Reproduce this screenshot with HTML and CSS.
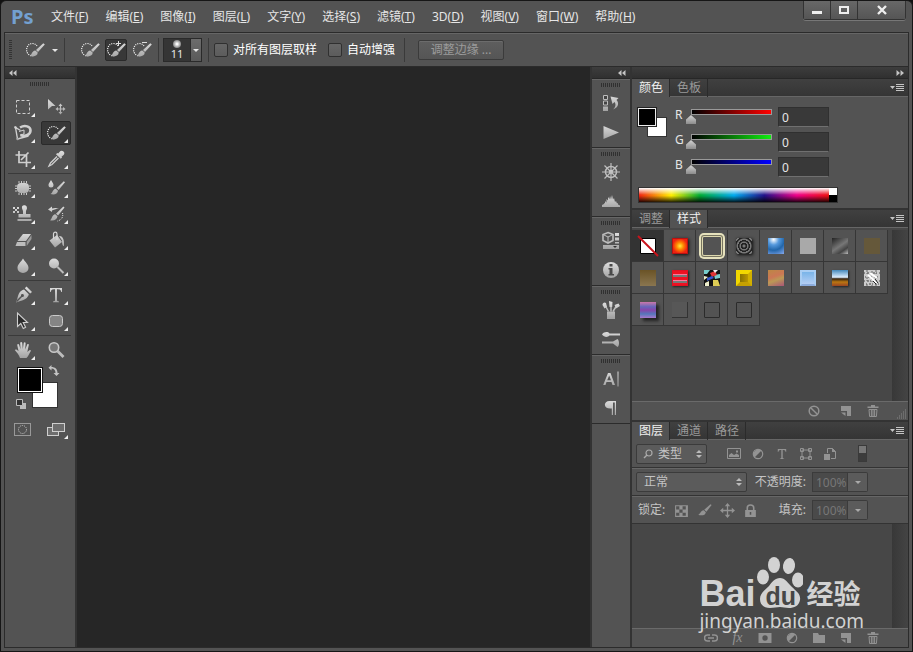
FILE: index.html
```
<!DOCTYPE html>
<html lang="zh-CN">
<head>
    <meta charset="UTF-8">
    <meta name="viewport" content="width=device-width, initial-scale=1.0">
    <title>Photoshop</title>
    <link rel="stylesheet" href="styles.css">
</head>
<body>
    <!-- Shared icons -->
    <svg class="sprite" aria-hidden="true">
        <defs>
            <linearGradient id="metal" gradientUnits="userSpaceOnUse" x1="0" y1="2" x2="0" y2="18">
                <stop offset="0" stop-color="#dedede"/>
                <stop offset="1" stop-color="#a2a2a2"/>
            </linearGradient>
        </defs>
        <symbol id="brush" viewBox="0 0 20 20">
            <path d="M19.500 2.500 12.600 11.500l-3-2.500L18 1.500z"/>
            <path d="M9 9.800l2.800 2.400c-.3 3.800-5 5.300-10.300 3.600 3-.8 3-5.600 7.500-6z"/>
        </symbol>
        <symbol id="quick-select" viewBox="0 0 20 20">
            <path d="M8.500 15.500C-.5 17-.5 3.500 7.500 3.500c2 0 3.500 1 4.500 2.500" fill="none" stroke="#f0f0f0" stroke-width="1.200" stroke-dasharray="1.100 1.100"/>
            <path d="M19.800 4.500 13 12l-2-1.900L18.300 3.200z"/>
            <path d="M10.300 10.400l2.400 2.200c0 3.600-4 4.600-8.200 3.200 2.600-.9 2-5 5.800-5.400z"/>
        </symbol>
        <symbol id="marquee" viewBox="0 0 20 20">
            <rect x="3.500" y="3.500" width="13" height="13" fill="none" stroke="#cfcfcf" stroke-dasharray="3 2"/>
        </symbol>
        <symbol id="move" viewBox="0 0 20 20">
            <path d="M2 2l7.500 7H6l-4 3.500z"/>
            <path d="M14.500 6.500l2 2.500h-1.400v2.400H17V10l2.500 2-2.500 2v-1.400h-1.900V15h1.400l-2 2.500-2-2.500h1.400v-2.400H12V14l-2.500-2 2.500-2v1.400h1.900V9h-1.400z"/>
        </symbol>
        <symbol id="lasso" viewBox="0 0 20 20">
            <path d="M4.500 16 2.500 4.500l5 3M4.500 16l11-3" fill="none" stroke="#cfcfcf" stroke-width="1.400"/>
            <path d="M7 4.500c5-3 10.500-1 10.500 3 0 4-5 6.500-10 4.500" fill="none" stroke="#cfcfcf" stroke-width="2.600"/>
            <path d="M6 8.500l5-1.500v4l-4 1" fill="none" stroke="#cfcfcf"/>
            <circle cx="2.500" cy="4.500" r="1.200"/><circle cx="4.500" cy="16" r="1.200"/>
        </symbol>
        <symbol id="crop" viewBox="0 0 20 20">
            <path d="M6 2v11.500h12M2.500 6h11v12M15.500 3.500 8 11" fill="none" stroke="#cfcfcf" stroke-width="1.700"/>
        </symbol>
        <symbol id="eyedropper" viewBox="0 0 20 20">
            <path d="M17.500 2.500c1.500 1.500.8 3-.5 4l-1.500 1.200.6.800-1.400 1.300L10 5.200l1.300-1.300.9.600 1.300-1.500c1-1.200 2.500-1.700 4-.5z"/>
            <path d="M11 7.500 4.500 14 3 17l3-1.500L12.500 9" fill="none" stroke="#cfcfcf" stroke-width="1.300"/>
        </symbol>
        <symbol id="patch" viewBox="0 0 20 20">
            <rect x="4" y="5" width="12" height="10" rx="4"/>
            <path d="M2 8h2M2 10.500h2M2 13h2M16 8h2M16 10.500h2M16 13h2M6 3v2M8.500 3v2M11 3v2M13.500 3v2M6 15v2M8.500 15v2M11 15v2M13.500 15v2" stroke="#c8c8c8" fill="none"/>
        </symbol>
        <symbol id="drop-brush" viewBox="0 0 20 20">
            <path d="M5 2c1.500 2.500 2.500 3.500 2.500 5a2.500 2.500 0 0 1-5 0C2.500 5.500 3.500 4.500 5 2z"/>
            <path d="M19 4.200 12.600 12l-2-1.800L17.800 3.200z"/>
            <path d="M9.800 10.800l2.200 2c-.3 3.200-3.700 4.500-7.500 3.300 2.200-.8 1.900-4.900 5.300-5.300z"/>
        </symbol>
        <symbol id="stamp" viewBox="0 0 20 20">
            <path d="M9 2.500a2.700 2.700 0 0 1 5 1.500c0 1.500-1 2-1 3.500V10h4.500v3.500h-12V10H10V7.500C10 6 8.500 4.500 9 2.500zM4.500 15h14v2h-14z"/>
            <path d="M0 3h2v2H0zM4 3h2v2H4zM2 5h2v2H2zM0 7h2v2H0zM4 7h2v2H4z"/>
        </symbol>
        <symbol id="history" viewBox="0 0 20 20">
            <path d="M2 5.500l4-3v2c3-1 5-.5 7 0-3 .5-4 .6-7 2V8z"/>
            <path d="M18.500 3.500 12 11.500l-2-1.800L17.300 2.500z"/>
            <path d="M9.300 10.300l2.200 2c-.3 3.200-3.500 5-7.500 4 2-.8 1.900-5.600 5.300-6z"/>
            <path d="M16.500 9c1 4-1 7-5 8" fill="none" stroke="#e0e0e0" stroke-dasharray="1 1"/>
        </symbol>
        <symbol id="eraser" viewBox="0 0 20 20">
            <path d="M10 4h8l-5 7H4.500z"/>
            <path d="M4 12h8.500v4H2.500z" fill="#bcbcbc"/>
            <path d="M13.700 11.800 18.500 5v4L13.700 16z" fill="#999"/>
        </symbol>
        <symbol id="bucket" viewBox="0 0 20 20">
            <path d="M3.500 10.500 11 5l5 7-7 5.500z"/>
            <path d="M7.500 9V4c0-2.500 3.500-2.500 3.500 0v6" fill="none" stroke="#d6d6d6" stroke-width="1.200"/>
            <path d="M13 6c4-.5 5.500 4 5 10-1.500 0-2-2-2-5.500z"/>
        </symbol>
        <symbol id="drop" viewBox="0 0 20 20">
            <path d="M10 2.500c2.500 4 5.500 6 5.500 9.500a5.500 5 0 0 1-11 0C4.500 8.500 7.500 6.500 10 2.500z"/>
        </symbol>
        <symbol id="dodge" viewBox="0 0 20 20">
            <circle cx="8" cy="7.500" r="5"/>
            <path d="M11.500 11l6 6" stroke="#bdbdbd" stroke-width="2"/>
        </symbol>
        <symbol id="pen" viewBox="0 0 20 20">
            <path d="M13.500 1.500 19 7l-1.800 1.600-5.400-5.400z"/>
            <path fill-rule="evenodd" d="M11 4.500 15.800 9.200c-1 4-4.300 5.800-9.300 7L3 17.500l1.300-3.800C5.500 8.700 7 5.500 11 4.500zM4 17l5-5a1.500 1.500 0 1 0-1-1l-5 5z"/>
        </symbol>
        <symbol id="type" viewBox="0 0 20 20">
            <path d="M4 3h12v4h-.8c-.3-2-1-2.800-4.200-2.800V15c0 1 .5 1.300 2 1.500v.7H7v-.7c1.500-.2 2-.5 2-1.500V4.200c-3.200 0-3.900.8-4.200 2.800H4z"/>
        </symbol>
        <symbol id="arrow" viewBox="0 0 20 20">
            <path d="M4.500 2v13.500l3.300-3 2.500 5 2.300-1.200-2.400-4.800h4.300z" fill="#2b2b2b" stroke="#cfcfcf" stroke-width="1.100"/>
        </symbol>
        <symbol id="shape" viewBox="0 0 20 20">
            <rect x="3.500" y="4.500" width="13" height="11" rx="3" fill="#858585" stroke="#cacaca"/>
        </symbol>
        <symbol id="hand" viewBox="0 0 20 20">
            <path d="M7 18c-1-3-3-5.500-5.200-8 .8-1 2.200-.5 3.700 1.200L4.200 4.800c.4-1 1.500-1 1.900 0l1.400 4.400-.3-6.400c.4-1.200 1.600-1.200 2 0l.6 6.200 1-6.200c.6-1 1.600-.8 1.800.2l-.4 6.500 2-5c.7-.8 1.700-.4 1.600.6L14.300 12l2.200-1.800c1-.4 1.500.3 1.200 1-1.500 2-2.200 4.800-4.200 6.800z"/>
        </symbol>
        <symbol id="zoom" viewBox="0 0 20 20">
            <circle cx="8" cy="7.500" r="4.700" fill="#777" stroke="#c8c8c8" stroke-width="1.600"/>
            <path d="M11.500 11l6 6" stroke="#bdbdbd" stroke-width="2.800"/>
        </symbol>
        <symbol id="mask" viewBox="0 0 20 20">
            <rect x="1.500" y="4.500" width="16" height="12" fill="none" stroke="#999"/>
            <circle cx="9.500" cy="10.500" r="4" fill="none" stroke="#ccc" stroke-dasharray="1 1"/>
        </symbol>
        <symbol id="screens" viewBox="0 0 20 20">
            <rect x="1.500" y="8.500" width="11" height="8" fill="#6e6e6e" stroke="#cfcfcf"/>
            <rect x="6.500" y="4.500" width="12" height="8" fill="#6e6e6e" stroke="#cfcfcf"/>
        </symbol>
        <symbol id="swap" viewBox="0 0 12 12">
            <path d="M3.500 0v2C7 2 9.500 4 9.500 8h2L8.500 11 5.500 8h2c0-3-1.500-4.500-4-4.500v2L.5 2.800z"/>
        </symbol>
        <symbol id="history-panel" viewBox="0 0 20 20">
            <path d="M2.500 2.500h4v4h-4zM2.500 8h4v4h-4z" fill="#444" stroke="#bdbdbd"/><path d="M2 13.500h5v4.500H2z"/>
            <path d="M12 16.500c6-2 6-7 3.500-9.500l2-2-8-1.500 2 7.500 2-2c1.500 2 1.500 5-1.500 7.500z"/>
        </symbol>
        <symbol id="play" viewBox="0 0 20 20"><path d="M2.500 4 18 10.500 2.500 17z"/></symbol>
        <symbol id="wheel" viewBox="0 0 20 20">
            <circle cx="10" cy="10" r="5.500" fill="none" stroke="#bdbdbd" stroke-width="1.500"/>
            <path d="M10 1v18M1 10h18M3.500 3.500l13 13M16.500 3.500l-13 13" stroke="#bdbdbd" stroke-width="1.200"/>
            <circle cx="10" cy="10" r="2.200"/>
        </symbol>
        <symbol id="histogram" viewBox="0 0 20 20">
            <path d="M1 16v-2l2-1v-1l1 .5V10l1.500 1.500V8L7 9.500V6l1.500 2L9 5l1 3.500L11 4l1 4.500L13 7l1 4 1-1 1 2.500 1-.5v1.500l2 1V16z"/>
        </symbol>
        <symbol id="props" viewBox="0 0 20 20">
            <path d="M7 1.500l5 2v6l-5 2.500-5-2.500v-6z" fill="none" stroke="#bdbdbd" stroke-width="1.600"/>
            <path d="M2 3.500l5 2.500 5-2.500M7 6v6" fill="none" stroke="#bdbdbd"/>
            <path d="M14 2h4v3h-4zM14 6.500h4v3h-4zM14 11h4v1.500h-4zM2 14h16v4H2z"/>
            <path d="M12 15h4l-2 2z" fill="#333"/>
        </symbol>
        <symbol id="info" viewBox="0 0 20 20">
            <circle cx="10" cy="10" r="8"/>
            <path d="M8.500 4h3v2.500h-3zM7.500 8h4v6h1.500v1.500h-5.500V14h1V9.500h-1z" fill="#4a4a4a"/>
        </symbol>
        <symbol id="brushes" viewBox="0 0 20 20">
            <path d="M6 11.500h8V19H6z"/>
            <path d="M7.500 11.500 4 5M10 11.500V5M12 11.500 16 5" stroke="#bdbdbd" stroke-width="1.500"/>
            <path d="M1.500 5c0-2 2-3.500 3.500-2l1 4-2.500 1.500zM8 1l3.500 1-.3 5H8.500zM13.500 5l4-1.500L19 6l-4 2.500z"/>
        </symbol>
        <symbol id="presets" viewBox="0 0 20 20">
            <path d="M1 5.500C3 2.500 7 2.500 8.500 4.500H19v2H8.500C7 8.500 3 8.500 1 5.500zM1 12.500h11l4.500-2.500c2 1.500 2 7 0 8L12 14.500H1z"/>
        </symbol>
        <symbol id="character" viewBox="0 0 20 20">
            <path fill-rule="evenodd" d="M7 4h2.500L14 16h-2.500l-1-3h-5l-1 3H2.200zM8.200 6.500 6.200 11.300h3.800zM16.500 2.500h1v15h-1z"/>
        </symbol>
        <symbol id="paragraph" viewBox="0 0 20 20">
            <path d="M15 3v14h-1.200V4.500H12V17h-1.200v-6.500C2 11.500 2 3 8.500 3z"/>
        </symbol>
        <symbol id="none" viewBox="0 0 14 14">
            <circle cx="7" cy="7" r="4.800" fill="none" stroke="currentColor" stroke-width="1.500"/>
            <path d="M3.700 3.700l6.600 6.600" stroke="currentColor" stroke-width="1.500"/>
        </symbol>
        <symbol id="new" viewBox="0 0 14 14"><path d="M2 2h10v10H8V7H2z"/><path d="M2 8.500h4.500V12z"/></symbol>
        <symbol id="trash" viewBox="0 0 14 14">
            <path d="M5 1h4v1.500h3.500V4h-11V2.500H5z"/>
            <path d="M3 5.500h8l-.6 7H3.600zM5.400 5.500v7M7 5.500v7M8.600 5.500v7" fill="none" stroke="currentColor"/>
        </symbol>
        <symbol id="picture" viewBox="0 0 14 14">
            <path d="M.5 1.500h13v10H.5z" fill="none" stroke="currentColor"/>
            <path d="M2 10V8l2.500-2L7 8l2.500-1.500L12 8v2zM9 3.500h2v2H9z"/>
        </symbol>
        <symbol id="adjust" viewBox="0 0 14 14">
            <circle cx="7" cy="7" r="4.700" fill="none" stroke="currentColor" stroke-width="1.200"/>
            <path d="M3.500 10.500l7-7A5 5 0 0 0 3.500 10.500z"/>
        </symbol>
        <symbol id="vector" viewBox="0 0 14 14">
            <path d="M3 3h8v8H3zM1.500 1.500h3v3h-3zM9.500 1.500h3v3h-3zM1.500 9.500h3v3h-3zM9.500 9.500h3v3h-3z" fill="none" stroke="currentColor"/>
        </symbol>
        <symbol id="smart" viewBox="0 0 14 14">
            <path d="M4.500 6V1.500h5l3 3v7H8" fill="none" stroke="currentColor"/>
            <path d="M1 7h6v6H1zM9 1v4h4z"/>
        </symbol>
        <symbol id="checker" viewBox="0 0 14 14">
            <path fill-rule="evenodd" d="M1 2h12v11H1zM2 3v3h3V3zM8 3v3h3V3zM5 6v3h3V6zM2 9v3h3V9zM8 9v3h3V9z"/>
        </symbol>
        <symbol id="cross" viewBox="0 0 14 14">
            <path d="M7 0l2.500 3H7.600v3.400H11V4.500L14 7l-3 2.500V7.600H7.600V11h1.900L7 14l-2.500-3h1.900V7.600H3v1.900L0 7l3-2.500v1.900h3.400V3H4.500z"/>
        </symbol>
        <symbol id="lock" viewBox="0 0 14 14">
            <path d="M4 7V4.500c0-3.500 6-3.500 6 0V7" fill="none" stroke="currentColor" stroke-width="1.500"/>
            <path fill-rule="evenodd" d="M2 6.500h10V13H2zM6.300 8.500v2.500h1.400V8.500z"/>
        </symbol>
        <symbol id="link" viewBox="0 0 14 14">
            <path d="M6 4H3.500a3 3 0 0 0 0 6H6M8 4h2.500a3 3 0 0 1 0 6H8M4 7h6" fill="none" stroke="currentColor" stroke-width="1.500"/>
        </symbol>
        <symbol id="add-mask" viewBox="0 0 14 14">
            <path fill-rule="evenodd" d="M.5 2h13v10H.5zM7 4.300a2.700 2.700 0 1 0 0 5.400 2.700 2.700 0 0 0 0-5.400z"/>
        </symbol>
        <symbol id="folder" viewBox="0 0 14 14"><path d="M1 2h5l1 2h6v8H1z"/></symbol>
        <symbol id="collapse" viewBox="0 0 8 6"><path d="M3.500 0v6L0 3zM7.500 0v6L4 3z"/></symbol>
        <symbol id="panel-menu" viewBox="0 0 14 9">
            <path d="M0 2h5L2.500 5zM6 0h8v1H6zM6 2h8v1H6zM6 4h8v1H6zM6 6h8v1H6z"/>
        </symbol>
    </svg>

    <div class="app">
        <header class="titlebar">
            <span class="logo">Ps</span>
            <nav class="menu">
                <button>文件(<u>F</u>)</button>
                <button>编辑(<u>E</u>)</button>
                <button>图像(<u>I</u>)</button>
                <button>图层(<u>L</u>)</button>
                <button>文字(<u>Y</u>)</button>
                <button>选择(<u>S</u>)</button>
                <button>滤镜(<u>T</u>)</button>
                <button>3D(<u>D</u>)</button>
                <button>视图(<u>V</u>)</button>
                <button>窗口(<u>W</u>)</button>
                <button>帮助(<u>H</u>)</button>
            </nav>
            <div class="window-buttons">
                <button aria-label="最小化"><svg width="12" height="10"><path d="M1 6h10v3H1z" fill="#eee"/></svg></button>
                <button aria-label="最大化"><svg width="12" height="10"><path d="M2 2h8v6H2z" fill="none" stroke="#eee" stroke-width="2"/></svg></button>
                <button class="close" aria-label="关闭"><svg width="12" height="10"><path d="M2 1l8 8M10 1L2 9" stroke="#eee" stroke-width="2.400"/></svg></button>
            </div>
        </header>

        <div class="frame">
            <div class="options">
                <span class="grip-v"></span>
                <button class="preset" aria-label="工具预设"><svg class="icon"><use href="#quick-select"/></svg><span class="caret"></span></button>
                <div class="modes">
                    <button aria-label="新选区"><svg class="icon"><use href="#quick-select"/></svg></button>
                    <button class="active" aria-label="添加到选区"><svg class="icon"><use href="#quick-select"/><path d="M12.500 1v5M10 3.500h5" stroke="#ddd"/></svg></button>
                    <button aria-label="从选区减去"><svg class="icon"><use href="#quick-select"/><path d="M10 2.500h5" stroke="#ddd"/></svg></button>
                </div>
                <div class="brush-box">
                    <button class="brush-size" aria-label="画笔大小"><span class="brush-tip"></span>11</button>
                    <button class="brush-drop" aria-label="画笔选项"><span class="caret"></span></button>
                </div>
                <div class="checks">
                    <label><input type="checkbox">对所有图层取样</label>
                    <label><input type="checkbox">自动增强</label>
                </div>
                <button class="refine" disabled>调整边缘 ...</button>
            </div>

            <div class="workspace">
                <aside class="toolbar">
                    <div class="bar"><svg class="chev"><use href="#collapse"/></svg></div>
                    <span class="grip"></span>
                    <div class="tool-group">
                        <button class="tool more" aria-label="选框"><svg class="icon"><use href="#marquee"/></svg></button>
                        <button class="tool" aria-label="移动"><svg class="icon"><use href="#move"/></svg></button>
                        <button class="tool more" aria-label="套索"><svg class="icon"><use href="#lasso"/></svg></button>
                        <button class="tool more active" aria-label="快速选择"><svg class="icon"><use href="#quick-select"/></svg></button>
                        <button class="tool more" aria-label="裁剪"><svg class="icon"><use href="#crop"/></svg></button>
                        <button class="tool more" aria-label="吸管"><svg class="icon"><use href="#eyedropper"/></svg></button>
                    </div>
                    <div class="tool-group">
                        <button class="tool more" aria-label="修补"><svg class="icon"><use href="#patch"/></svg></button>
                        <button class="tool more" aria-label="混合器画笔"><svg class="icon"><use href="#drop-brush"/></svg></button>
                        <button class="tool more" aria-label="图章"><svg class="icon"><use href="#stamp"/></svg></button>
                        <button class="tool more" aria-label="历史画笔"><svg class="icon"><use href="#history"/></svg></button>
                        <button class="tool more" aria-label="橡皮擦"><svg class="icon"><use href="#eraser"/></svg></button>
                        <button class="tool more" aria-label="油漆桶"><svg class="icon"><use href="#bucket"/></svg></button>
                        <button class="tool more" aria-label="模糊"><svg class="icon"><use href="#drop"/></svg></button>
                        <button class="tool more" aria-label="减淡"><svg class="icon"><use href="#dodge"/></svg></button>
                    </div>
                    <div class="tool-group">
                        <button class="tool more" aria-label="钢笔"><svg class="icon"><use href="#pen"/></svg></button>
                        <button class="tool more" aria-label="文字"><svg class="icon"><use href="#type"/></svg></button>
                        <button class="tool more" aria-label="路径选择"><svg class="icon"><use href="#arrow"/></svg></button>
                        <button class="tool more" aria-label="圆角矩形"><svg class="icon"><use href="#shape"/></svg></button>
                    </div>
                    <div class="tool-group">
                        <button class="tool more" aria-label="抓手"><svg class="icon"><use href="#hand"/></svg></button>
                        <button class="tool" aria-label="缩放"><svg class="icon"><use href="#zoom"/></svg></button>
                    </div>
                    <div class="colors">
                        <button class="back" aria-label="背景色"></button>
                        <button class="fore" aria-label="前景色"></button>
                        <button class="swap" aria-label="切换颜色"><svg width="12" height="12" class="metal"><use href="#swap"/></svg></button>
                        <button class="reset" aria-label="默认颜色"><svg width="10" height="10"><path d="M4 4h6v6H4z" fill="#bbb"/><path d="M.5.5h6v6h-6z" fill="#333" stroke="#bbb"/></svg></button>
                    </div>
                    <div class="tool-group plain">
                        <button class="tool" aria-label="快速蒙版"><svg class="icon"><use href="#mask"/></svg></button>
                        <button class="tool more" aria-label="屏幕模式"><svg class="icon"><use href="#screens"/></svg></button>
                    </div>
                </aside>

                <main class="canvas"></main>

                <aside class="dock">
                    <div class="bar end"><svg class="chev"><use href="#collapse"/></svg></div>
                    <div class="dock-group">
                        <span class="grip"></span>
                        <button aria-label="历史记录"><svg class="icon"><use href="#history-panel"/></svg></button>
                        <button aria-label="动作"><svg class="icon"><use href="#play"/></svg></button>
                    </div>
                    <div class="dock-group">
                        <span class="grip"></span>
                        <button aria-label="导航器"><svg class="icon"><use href="#wheel"/></svg></button>
                        <button aria-label="直方图"><svg class="icon"><use href="#histogram"/></svg></button>
                    </div>
                    <div class="dock-group">
                        <span class="grip"></span>
                        <button aria-label="属性"><svg class="icon"><use href="#props"/></svg></button>
                        <button aria-label="信息"><svg class="icon"><use href="#info"/></svg></button>
                    </div>
                    <div class="dock-group">
                        <span class="grip"></span>
                        <button aria-label="画笔"><svg class="icon"><use href="#brushes"/></svg></button>
                        <button aria-label="画笔预设"><svg class="icon"><use href="#presets"/></svg></button>
                    </div>
                    <div class="dock-group">
                        <span class="grip"></span>
                        <button aria-label="字符"><svg class="icon"><use href="#character"/></svg></button>
                        <button aria-label="段落"><svg class="icon"><use href="#paragraph"/></svg></button>
                    </div>
                </aside>

                <aside class="panels">
                    <div class="bar end"><svg class="chev flip"><use href="#collapse"/></svg></div>

                    <section class="panel">
                        <div class="tabs">
                            <button class="active">颜色</button>
                            <button>色板</button>
                            <button class="panel-menu" aria-label="面板菜单"><svg width="14" height="9"><use href="#panel-menu"/></svg></button>
                        </div>
                        <div class="color-body">
                            <div class="pair"><span class="pair-back"></span><span class="pair-fore"></span></div>
                            <div class="channels">
                                <div class="channel">
                                    <label for="red">R</label>
                                    <input class="slider red" type="range" min="0" max="255" value="0" aria-label="R">
                                    <input class="value" id="red" type="text" value="0">
                                </div>
                                <div class="channel">
                                    <label for="green">G</label>
                                    <input class="slider green" type="range" min="0" max="255" value="0" aria-label="G">
                                    <input class="value" id="green" type="text" value="0">
                                </div>
                                <div class="channel">
                                    <label for="blue">B</label>
                                    <input class="slider blue" type="range" min="0" max="255" value="0" aria-label="B">
                                    <input class="value" id="blue" type="text" value="0">
                                </div>
                            </div>
                        </div>
                        <div class="spectrum"><span class="hues"></span><span class="mono"></span></div>
                    </section>

                    <section class="panel">
                        <div class="tabs">
                            <button>调整</button>
                            <button class="active">样式</button>
                            <button class="panel-menu" aria-label="面板菜单"><svg width="14" height="9"><use href="#panel-menu"/></svg></button>
                        </div>
                        <div class="list styles-list">
                            <div class="style-grid">
                                <button class="cell dark" aria-label="无"><svg width="22" height="22"><path d="M3.500 3.500h15v15h-15z" fill="#fff" stroke="#000"/><path d="M1 1l20 20" stroke="#c8141c" stroke-width="2"/></svg></button>
                                <button class="cell"><span class="sw fire"></span></button>
                                <button class="cell"><span class="sw ring"></span></button>
                                <button class="cell"><span class="sw ripple"></span></button>
                                <button class="cell"><span class="sw ocean"></span></button>
                                <button class="cell"><span class="sw grey"></span></button>
                                <button class="cell"><span class="sw chrome"></span></button>
                                <button class="cell"><span class="sw brown"></span></button>
                                <button class="cell"><span class="sw bronze"></span></button>
                                <button class="cell"><span class="sw stripes"></span></button>
                                <button class="cell"><svg width="16" height="16"><path d="M0 0h16v16H0z" fill="#111"/><path d="M0 0h6L3 4H0zM10 5l6-1v4l-5 1z" fill="#7cc"/><path d="M6 3l5-2 2 4-5 2z" fill="#d33"/><path d="M3 8l5-2 2 2-7 3z" fill="#35c"/><path d="M0 6l4 1-4 3zM1 13l4-2v5H1z" fill="#eec"/><path d="M9 10l5 0 2 6H9z" fill="#dc5"/><path d="M9 0h5l-3 3z" fill="#eee"/></svg></button>
                                <button class="cell"><span class="sw gold"></span></button>
                                <button class="cell"><span class="sw copper"></span></button>
                                <button class="cell"><span class="sw glass"></span></button>
                                <button class="cell"><span class="sw desert"></span></button>
                                <button class="cell"><svg width="16" height="16"><path d="M0 0h16v16H0z" fill="#ccc"/><path d="M0 3h16M1 7h14M0 11h16M2 14h14" stroke="#444" stroke-dasharray="1 2 2 1"/><path d="M3 0v16M8 1v15M12 0v16" stroke="#666" stroke-dasharray="2 1 1 3"/><path d="M4 5l9 8M6 3l7 5" stroke="#fff" stroke-width="2"/><path d="M9 11l3 3M11 9l3 4" stroke="#222" fill="none"/></svg></button>
                                <button class="cell"><span class="sw violet"></span></button>
                                <button class="cell"><span class="sw faint"></span></button>
                                <button class="cell"><span class="sw outline"></span></button>
                                <button class="cell"><span class="sw outline"></span></button>
                            </div>
                            <span class="scroll"></span>
                        </div>
                        <div class="footer">
                            <button class="clear" aria-label="清除样式"><svg class="mini"><use href="#none"/></svg></button>
                            <button aria-label="新建样式"><svg class="mini"><use href="#new"/></svg></button>
                            <button aria-label="删除样式"><svg class="mini"><use href="#trash"/></svg></button>
                            <svg class="resize" width="10" height="10"><path d="M8 1h1M6 3h1M8 3h1M4 5h1M6 5h1M8 5h1M2 7h1M4 7h1M6 7h1M8 7h1M0 9h1M2 9h1M4 9h1M6 9h1M8 9h1" stroke="#888"/></svg>
                        </div>
                    </section>

                    <section class="panel layers">
                        <div class="tabs">
                            <button class="active">图层</button>
                            <button>通道</button>
                            <button>路径</button>
                            <button class="panel-menu" aria-label="面板菜单"><svg width="14" height="9"><use href="#panel-menu"/></svg></button>
                        </div>
                        <div class="row">
                            <select class="kind" aria-label="滤镜类型"><option>类型</option></select>
                            <div class="filters">
                                <button aria-label="像素"><svg class="mini"><use href="#picture"/></svg></button>
                                <button aria-label="调整"><svg class="mini"><use href="#adjust"/></svg></button>
                                <button aria-label="文字"><svg class="mini"><use href="#type"/></svg></button>
                                <button aria-label="形状"><svg class="mini"><use href="#vector"/></svg></button>
                                <button aria-label="智能对象"><svg class="mini"><use href="#smart"/></svg></button>
                            </div>
                            <button class="toggle" aria-label="滤镜开关"></button>
                        </div>
                        <div class="row">
                            <select class="blend" aria-label="混合模式"><option>正常</option></select>
                            <label class="amount" for="opacity">不透明度:</label>
                            <input class="percent" id="opacity" type="text" value="100%" disabled>
                            <button class="drop-btn" aria-label="不透明度"><span class="caret"></span></button>
                        </div>
                        <div class="row">
                            <span class="lock-label">锁定:</span>
                            <div class="locks">
                                <button aria-label="锁定透明像素"><svg class="mini"><use href="#checker"/></svg></button>
                                <button aria-label="锁定图像像素"><svg class="mini"><use href="#brush"/></svg></button>
                                <button aria-label="锁定位置"><svg class="mini"><use href="#cross"/></svg></button>
                                <button aria-label="锁定全部"><svg class="mini"><use href="#lock"/></svg></button>
                            </div>
                            <label class="amount" for="fill">填充:</label>
                            <input class="percent" id="fill" type="text" value="100%" disabled>
                            <button class="drop-btn" aria-label="填充"><span class="caret"></span></button>
                        </div>
                        <div class="list layers-list"><span class="scroll"></span></div>
                        <div class="footer">
                            <button aria-label="链接图层"><svg class="mini"><use href="#link"/></svg></button>
                            <button class="fx" aria-label="图层样式">fx</button>
                            <button aria-label="添加蒙版"><svg class="mini"><use href="#add-mask"/></svg></button>
                            <button aria-label="调整图层"><svg class="mini"><use href="#adjust"/></svg></button>
                            <button aria-label="新建组"><svg class="mini"><use href="#folder"/></svg></button>
                            <button aria-label="新建图层"><svg class="mini"><use href="#new"/></svg></button>
                            <button aria-label="删除图层"><svg class="mini"><use href="#trash"/></svg></button>
                            <span class="footer-end"></span>
                        </div>
                    </section>
                </aside>
            </div>
        </div>

        <div class="watermark">
            <div class="brand">
                <span class="bai">Bai</span>
                <span class="paw">
                    <svg width="48" height="54" viewBox="0 0 48 54">
                        <ellipse cx="8" cy="21" rx="6" ry="7.500"/>
                        <ellipse cx="19" cy="9" rx="6" ry="8"/>
                        <ellipse cx="34" cy="10" rx="6" ry="8" transform="rotate(10 34 10)"/>
                        <ellipse cx="43" cy="24" rx="6" ry="7.500"/>
                        <path d="M25 22c5 0 8 5 12 9 4 4 9 7 8 13-1 6-6 8-11 8-4 0-6-1-9-1s-6 1-10 1C9 52 5 49 5 43c0-6 5-9 9-13 3-4 6-8 11-8z"/>
                    </svg>
                    <span class="du">du</span>
                </span>
                <span class="jingyan">经验</span>
            </div>
            <div class="address">jingyan.baidu.com</div>
        </div>
    </div>
</body>
</html>
```
FILE: styles.css
```
* {
    margin: 0;
    padding: 0;
    box-sizing: border-box;
}

body {
    font-family: 'Noto Sans', 'Noto Sans CJK SC', sans-serif;
    font-size: 12px;
    line-height: 16px;
    color: #e6e6e6;
    background-color: #111;
}

button,
input,
select {
    font: inherit;
    color: inherit;
    background: none;
    border: none;
}

svg {
    display: block;
    flex: none;
}

.sprite {
    position: absolute;
    width: 0;
    height: 0;
}

.icon {
    width: 20px;
    height: 20px;
    fill: url(#metal);
}

.metal {
    fill: #c4c4c4;
}

.mini {
    width: 14px;
    height: 14px;
    fill: currentColor;
}

.caret {
    border: 3px solid transparent;
    border-top-color: #e6e6e6;
    border-bottom: none;
}

.app {
    position: relative;
    display: flex;
    flex-direction: column;
    height: 100vh;
    min-height: 640px;
    padding: 0 3px 3px;
    background-color: #535353;
    border: 1px solid #161616;
    border-radius: 6px 6px 0 0;
}

/* Title bar */
.titlebar {
    display: flex;
    align-items: center;
    flex: none;
    height: 31px;
    padding-left: 7px;
}

.logo {
    width: 40px;
    font-size: 20px;
    font-weight: bold;
    line-height: 28px;
    color: #73a0d0;
}

.menu {
    display: flex;
    flex: 1;
    gap: 17px;
    white-space: nowrap;
}

.window-buttons {
    display: flex;
    align-self: flex-start;
    margin-right: 3px;
    border: 1px solid #333;
    border-top: none;
    border-radius: 0 0 3px 3px;
    box-shadow: 0 1px 0 #777;
}

.window-buttons button {
    display: flex;
    align-items: center;
    justify-content: center;
    width: 27px;
    height: 18px;
    background: linear-gradient(#686868, #555);
    border-right: 1px solid #333;
}

.window-buttons .close {
    width: 47px;
    border-right: none;
}

.frame {
    display: flex;
    flex-direction: column;
    flex: 1;
    min-height: 0;
    border: 1px solid #2b2b2b;
}

/* Options bar */
.options {
    display: flex;
    align-items: center;
    flex: none;
    height: 34px;
    padding-left: 4px;
    border-top: 1px solid #666;
    border-bottom: 1px solid #2b2b2b;
    white-space: nowrap;
}

.grip-v {
    width: 3px;
    height: 20px;
    margin-right: 13px;
    background: repeating-linear-gradient(#333 0 1px, transparent 1px 2px);
}

.preset {
    display: flex;
    align-items: center;
    gap: 7px;
    height: 24px;
    padding-right: 6px;
    border-right: 1px solid #3a3a3a;
}

.modes {
    display: flex;
    gap: 4px;
    height: 24px;
    padding: 1px 5px 1px 14px;
    border-right: 1px solid #3a3a3a;
}

.modes button {
    border: 1px solid transparent;
    border-radius: 2px;
}

.modes button.active {
    background-color: #383838;
    border-color: #2a2a2a;
}

.brush-box {
    display: flex;
    padding: 0 6px 0 4px;
    border-right: 1px solid #3a3a3a;
}

.brush-size {
    width: 28px;
    height: 24px;
    font-size: 11px;
    line-height: 12px;
    background-color: #353535;
    border: 1px solid #2a2a2a;
}

.brush-tip {
    display: block;
    width: 8px;
    height: 8px;
    margin: 0 auto;
    border-radius: 50%;
    background: radial-gradient(#fff 10%, #999 60%, #555);
}

.brush-drop {
    display: flex;
    align-items: center;
    justify-content: center;
    width: 11px;
    height: 24px;
    background: linear-gradient(#6c6c6c, #5a5a5a);
    border: 1px solid #2a2a2a;
    border-left: none;
}

.checks {
    display: flex;
    gap: 11px;
    height: 24px;
    padding: 0 9px 0 5px;
    border-right: 1px solid #3a3a3a;
}

.checks label {
    display: flex;
    align-items: center;
    gap: 5px;
    color: #fff;
}

.checks input {
    appearance: none;
    width: 14px;
    height: 14px;
    background: linear-gradient(#666, #5c5c5c);
    border: 1px solid #303030;
    border-radius: 2px;
}

.refine {
    width: 86px;
    height: 20px;
    margin-left: 13px;
    line-height: 16px;
    color: #9b9b9b;
    background: linear-gradient(#5e5e5e, #555);
    border: 1px solid #3b3b3b;
    border-radius: 2px;
    box-shadow: inset 0 1px 0 #6c6c6c;
}

/* Workspace columns */
.workspace {
    display: flex;
    flex: 1;
    min-height: 0;
    gap: 2px;
    background-color: #333;
}

.bar {
    display: flex;
    align-items: center;
    flex: none;
    height: 12px;
    padding: 0 4px;
    background: linear-gradient(#3d3d3d, #303030);
    border-bottom: 1px solid #272727;
}

.bar.end {
    justify-content: flex-end;
}

.chev {
    width: 8px;
    height: 6px;
    fill: #c4c4c4;
}

.flip {
    transform: scaleX(-1);
}

.grip {
    display: block;
    width: 20px;
    height: 4px;
    margin: 3px auto 0;
    background: repeating-linear-gradient(to right, #303030 0 1px, transparent 1px 2px);
}

.toolbar {
    flex: none;
    width: 70px;
    background-color: #535353;
}

.toolbar .grip {
    margin-bottom: 7px;
}

.tool-group {
    display: grid;
    grid-template-columns: 30px 30px;
    column-gap: 3px;
    row-gap: 2px;
    margin: 0 4px 0 3px;
    padding: 2px 0;
}

.tool-group + .tool-group {
    border-top: 1px solid #3a3a3a;
}

.tool {
    position: relative;
    display: flex;
    align-items: center;
    justify-content: center;
    height: 24px;
    border: 1px solid transparent;
    border-radius: 2px;
}

.tool.active {
    background-color: #383838;
    border-color: #2a2a2a;
}

.tool.more::after {
    content: '';
    position: absolute;
    right: 2px;
    bottom: 1px;
    border: 2px solid transparent;
    border-right-color: #eee;
    border-bottom-color: #eee;
}

.colors {
    position: relative;
    width: 44px;
    height: 46px;
    margin: 3px 0 2px 12px;
}

.colors button {
    position: absolute;
}

.colors .fore {
    top: 0;
    left: 0;
    width: 26px;
    height: 26px;
    background-color: #000;
    border: 1px solid #111;
    box-shadow: inset 0 0 0 1px #fff;
}

.colors .back {
    top: 15px;
    left: 15px;
    width: 26px;
    height: 26px;
    background-color: #fff;
    border: 1px solid #333;
}

.colors .swap {
    top: -2px;
    left: 31px;
}

.colors .reset {
    top: 32px;
    left: -1px;
}

.canvas {
    flex: 1;
    min-width: 0;
    background-color: #262626;
}

.dock {
    flex: none;
    width: 38px;
    background-color: #535353;
}

.dock-group {
    display: flex;
    flex-direction: column;
    align-items: center;
    height: 69px;
    border-top: 1px solid #666;
    border-bottom: 1px solid #2b2b2b;
}

.dock-group .grip {
    margin-bottom: 1px;
}

.dock-group button {
    height: 29px;
}

/* Panels */
.panels {
    display: flex;
    flex-direction: column;
    flex: none;
    width: 276px;
}

.panel {
    flex: none;
    margin-bottom: 2px;
    background-color: #535353;
}

.panel.layers {
    display: flex;
    flex-direction: column;
    flex: 1;
    min-height: 0;
    margin-bottom: 0;
}

.tabs {
    display: flex;
    height: 18px;
    background: linear-gradient(#404040, #353535);
    border-bottom: 1px solid #666;
}

.tabs button {
    height: 18px;
    padding: 0 6px 0 7px;
    line-height: 18px;
    color: #9a9a9a;
    border-right: 1px solid #2b2b2b;
}

.tabs .active {
    color: #f0f0f0;
    background-color: #535353;
}

.tabs .panel-menu {
    margin-left: auto;
    padding: 0 4px;
    fill: #c4c4c4;
    border: none;
}

.color-body {
    display: flex;
    gap: 9px;
    padding: 10px 5px 0;
}

.pair {
    position: relative;
    width: 29px;
    height: 32px;
}

.pair span {
    position: absolute;
}

.pair-fore {
    top: 0;
    left: 0;
    width: 20px;
    height: 20px;
    background-color: #000;
    border: 2px solid #eee;
    outline: 1px solid #222;
    outline-offset: -1px;
}

.pair-back {
    top: 10px;
    left: 10px;
    width: 20px;
    height: 20px;
    background-color: #fff;
    border: 1px solid #333;
}

.channels {
    display: flex;
    flex-direction: column;
    gap: 5px;
}

.channel {
    display: flex;
    align-items: flex-start;
    height: 20px;
}

.channel label {
    width: 11px;
}

.slider {
    appearance: none;
    width: 92px;
    height: 17px;
    background-repeat: no-repeat;
    background-position: 6px 3px, 5px 2px;
    background-size: 79px 4px, 81px 6px;
}

.slider::-webkit-slider-runnable-track {
    height: 17px;
}

.slider::-webkit-slider-thumb {
    appearance: none;
    width: 10px;
    height: 9px;
    margin-top: 8px;
    background: linear-gradient(#d5d5d5, #8c8c8c);
    clip-path: polygon(50% 0, 100% 50%, 100% 100%, 0 100%, 0 50%);
}

.slider.red {
    background-image: linear-gradient(to right, #000, #f00), linear-gradient(#999, #999);
}

.slider.green {
    background-image: linear-gradient(to right, #000, #1e1), linear-gradient(#999, #999);
}

.slider.blue {
    background-image: linear-gradient(to right, #000, #00f), linear-gradient(#999, #999);
}

.value {
    width: 51px;
    height: 20px;
    padding-left: 3px;
    background-color: #393939;
    border: 1px solid #303030;
    border-bottom-color: #707070;
}

.spectrum {
    display: flex;
    width: 200px;
    height: 16px;
    margin: 10px 0 5px 6px;
    border: 1px solid #333;
}

.hues {
    flex: 1;
    background:
        linear-gradient(#fff 0, rgba(255, 255, 255, 0) 50%, rgba(0, 0, 0, 0) 55%, rgba(0, 0, 0, 0.85)),
        linear-gradient(to right, #e21, #fe0 17%, #0a3 32%, #0ae 50%, #218 66%, #e08 83%, #e11);
}

.mono {
    width: 8px;
    background: linear-gradient(#fff 50%, #000 50%);
}

.list {
    display: flex;
    justify-content: space-between;
    background-color: #474747;
}

.styles-list {
    height: 173px;
    padding-top: 2px;
}

.layers-list {
    flex: 1;
    min-height: 0;
    justify-content: flex-end;
}

.scroll {
    width: 16px;
    background: linear-gradient(to right, #383838, #444);
}

.style-grid {
    display: grid;
    grid-template-columns: repeat(8, 32px);
    grid-auto-rows: 32px;
}

.cell {
    display: flex;
    align-items: center;
    justify-content: center;
    background-color: #535353;
    border-right: 1px solid #363636;
    border-bottom: 1px solid #363636;
}

.cell.dark {
    background-color: #333;
}

.sw {
    width: 16px;
    height: 16px;
}

.fire {
    background: radial-gradient(#fd3 5%, #f80 35%, #e21 75%);
    border: 1px solid #b11;
    box-shadow: 1px 1px 3px #111;
}

.ring {
    width: 20px;
    height: 20px;
    border: 1px solid #ddd8ae;
    border-radius: 2px;
    box-shadow: 0 0 0 1px #77745f, 0 0 0 3px #e6e2bd;
}

.ripple {
    background: repeating-radial-gradient(#777 0 1px, #222 2px 3px);
    box-shadow: 1px 1px 3px #111;
}

.ocean {
    background: radial-gradient(circle at 35% 10%, #fff, #59d 30%, #26a 60%, #8ae);
}

.grey {
    background-color: #a9a9a9;
}

.chrome {
    background: linear-gradient(145deg, #222, #777 50%, #444 75%, #bbb);
}

.brown {
    background-color: #65583a;
}

.bronze {
    background: linear-gradient(#6a5326, #8a7650);
}

.stripes {
    background: repeating-linear-gradient(#e12 0 3px, #f79 3px 4px, #777 4px 6px);
    border: 1px solid #d12;
    box-shadow: 1px 1px 2px #222;
}

.gold {
    background: linear-gradient(to right, #887200, #ba9700);
    border: 4px solid #f2d800;
    border-right-color: #d2b000;
    border-bottom-color: #c5a000;
}

.copper {
    background: linear-gradient(160deg, #b84, #c75 40%, #b95 60%, #a57);
}

.glass {
    background: linear-gradient(#79b4e8, #b4cef4);
    border: 2px solid #a9cdf2;
    border-bottom-color: #8cacdc;
}

.desert {
    background: linear-gradient(#48b, #def 45%, #321 55%, #b71 75%, #942);
    box-shadow: 1px 1px 2px #222;
}

.violet {
    background: linear-gradient(#c7a, #66b 30%, #84a 50%, #57b 75%, #a7c);
    box-shadow: 3px 3px 3px #222;
}

.faint {
    background-color: #575757;
    border-right: 1px solid #333;
    border-bottom: 1px solid #333;
}

.outline {
    border: 1px solid #2b2b2b;
    border-radius: 1px;
}

.footer {
    display: flex;
    align-items: center;
    justify-content: flex-end;
    flex: none;
    height: 19px;
    color: #929292;
    border-top: 1px solid #6a6a6a;
}

.footer button {
    display: flex;
    justify-content: center;
    width: 27px;
}

.footer .clear {
    margin-right: 5px;
}

.footer .fx {
    font-family: 'Liberation Serif', serif;
    font-size: 14px;
    font-style: italic;
    line-height: 14px;
}

.resize {
    align-self: flex-end;
    margin: 0 1px 1px 11px;
}

.footer-end {
    width: 22px;
}

.row {
    display: flex;
    align-items: center;
    flex: none;
    height: 28px;
    padding-left: 4px;
    color: #c4c4c4;
    white-space: nowrap;
    border-bottom: 1px solid #333;
}

.row + .row {
    border-top: 1px solid #666;
}

.row select {
    appearance: none;
    height: 20px;
    background-color: #5b5b5b;
    background-repeat: no-repeat;
    border: 1px solid #3b3b3b;
    border-radius: 2px;
}

.row .kind {
    width: 71px;
    padding-left: 21px;
    background-image:
        url("data:image/svg+xml,%3Csvg xmlns='http://www.w3.org/2000/svg' width='8' height='10'%3E%3Cpath d='M1 4l3-3 3 3zM1 6h6L4 9z' fill='%23bbb'/%3E%3C/svg%3E"),
        url("data:image/svg+xml,%3Csvg xmlns='http://www.w3.org/2000/svg' width='10' height='10'%3E%3Ccircle cx='6' cy='4' r='3' fill='none' stroke='%23aaa' stroke-width='1.2'/%3E%3Cpath d='M4 6L1 9' stroke='%23aaa' stroke-width='1.5'/%3E%3C/svg%3E");
    background-position: right 3px center, 6px center;
}

.row .blend {
    width: 111px;
    padding-left: 7px;
    background-image: url("data:image/svg+xml,%3Csvg xmlns='http://www.w3.org/2000/svg' width='8' height='10'%3E%3Cpath d='M1 4l3-3 3 3zM1 6h6L4 9z' fill='%23bbb'/%3E%3C/svg%3E");
    background-position: right 3px center;
}

.filters,
.locks {
    display: flex;
    color: #939393;
}

.filters {
    gap: 10px;
    margin-left: 20px;
}

.locks {
    gap: 8px;
}

.locks .mini {
    width: 15px;
    height: 15px;
}

.toggle {
    width: 9px;
    height: 17px;
    margin-left: 21px;
    background: linear-gradient(#777 45%, #3c3c3c 45%);
    border: 1px solid #3a3a3a;
}

.lock-label {
    width: 36px;
    margin-left: 2px;
}

.amount {
    flex: none;
    width: 65px;
    padding-right: 6px;
    text-align: right;
}

.locks + .amount {
    width: auto;
    margin-left: auto;
}

.percent {
    flex: none;
    width: 36px;
    height: 20px;
    padding-left: 3px;
    color: #777;
    background-color: #4a4a4a;
    border: 1px solid #3b3b3b;
}

.drop-btn {
    display: flex;
    align-items: center;
    justify-content: center;
    flex: none;
    width: 20px;
    height: 20px;
    margin-right: 40px;
    background-color: #5b5b5b;
    border: 1px solid #3b3b3b;
    border-left: none;
    border-radius: 0 2px 2px 0;
}

.drop-btn .caret {
    border-top-color: #aaa;
}

/* Watermark over the layers panel */
.watermark {
    position: absolute;
    right: 48px;
    bottom: 19px;
    color: #d2d2d2;
    pointer-events: none;
}

.brand {
    display: flex;
    align-items: flex-end;
    height: 54px;
}

.bai {
    font-family: 'Liberation Sans', sans-serif;
    font-size: 36px;
    font-weight: bold;
    line-height: 32px;
}

.paw {
    position: relative;
    fill: #d2d2d2;
}

.du {
    position: absolute;
    bottom: 0;
    left: 10px;
    font-family: 'Liberation Sans', sans-serif;
    font-size: 25px;
    font-weight: bold;
    line-height: 28px;
    color: #474747;
}

.jingyan {
    margin-left: 3px;
    font-size: 27px;
    font-weight: bold;
    line-height: 32px;
}

.address {
    font-size: 19px;
    line-height: 22px;
}
```
